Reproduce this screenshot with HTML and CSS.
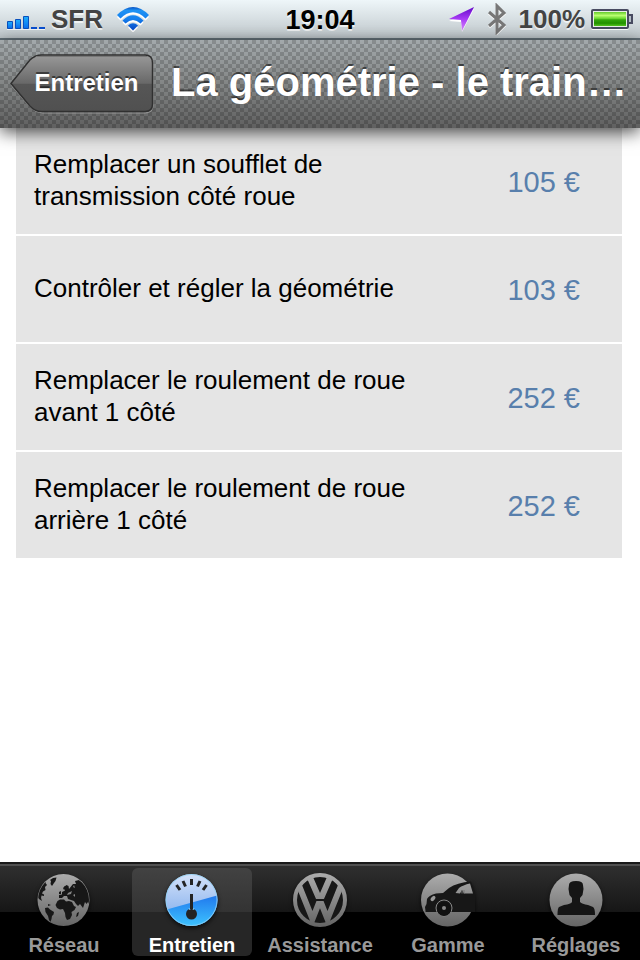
FILE: index.html
```html
<!DOCTYPE html>
<html lang="fr">
<head>
<meta charset="utf-8">
<meta name="viewport" content="width=device-width, initial-scale=1">
<title>La géométrie - le train…</title>
<link rel="stylesheet" href="styles.css">
</head>
<body>
<div class="status">
  <div class="status-left">
    <svg class="signal" width="38" height="22" viewBox="0 0 38 22" aria-hidden="true">
      <defs><linearGradient id="bar" x1="0" y1="0" x2="0" y2="1"><stop offset="0" stop-color="#1fb0fb"/><stop offset="1" stop-color="#0a6df0"/></linearGradient></defs>
      <path d="M0 22h38" stroke="#fff" stroke-width="2" opacity=".8"/>
      <g fill="url(#bar)" stroke="#0a50bd"><path d="M.5 13.500h5v7h-5z"/><path d="M8.500 11.500h5v9h-5z"/><path d="M16.500 8.500h5v12h-5z"/></g>
      <path d="M24 20h6M32 20h6" stroke="#0a4fd0" stroke-width="2"/>
    </svg>
    <span class="carrier">SFR</span>
    <svg class="wifi" width="32" height="26" viewBox="0 0 32 26" aria-hidden="true">
      <defs><linearGradient id="wave" gradientUnits="userSpaceOnUse" x1="0" y1="0" x2="0" y2="24"><stop offset="0" stop-color="#0753c4"/><stop offset=".15" stop-color="#1f93f4"/><stop offset=".5" stop-color="#1580ee"/><stop offset="1" stop-color="#0745c6"/></linearGradient></defs>
      <g fill="#fff" transform="translate(0 3)"><path d="M0 8Q16-8 32 8L28.500 11.500Q16-1 3.500 11.500Z"/><path d="M5.500 13.500Q16 3 26.500 13.500L23.500 16.500Q16 9.500 8.500 16.500Z"/><path d="M11 18.500Q16 14 21 18.500L16 23.500Z"/></g>
      <g fill="url(#wave)" transform="translate(0 1)"><path d="M0 8Q16-8 32 8L28.500 11.500Q16-1 3.500 11.500Z"/><path d="M5.500 13.500Q16 3 26.500 13.500L23.500 16.500Q16 9.500 8.500 16.500Z"/><path d="M11 18.500Q16 14 21 18.500L16 23.500Z"/></g>
    </svg>
  </div>
  <time class="clock">19:04</time>
  <div class="status-right">
    <svg width="26" height="26" viewBox="0 0 26 26" aria-hidden="true">
      <defs><linearGradient id="loc" x1="0" y1="0" x2="0" y2="1"><stop offset="0" stop-color="#6409c9"/><stop offset=".5" stop-color="#a83cf5"/><stop offset="1" stop-color="#d98cff"/></linearGradient></defs>
      <path d="M25 3L13 26L12 16L0 15Z" fill="#fff"/><path d="M25 1L13 25L12 14L0 13Z" fill="url(#loc)"/>
    </svg>
    <svg class="bluetooth" width="20" height="32" viewBox="0 0 20 32" aria-hidden="true">
      <path d="M2 10L17 23L10 30V4L17 11L2 24" fill="none" stroke="#fff" stroke-width="3"/>
      <path d="M2 9L17 22L10 29V3L17 10L2 23" fill="none" stroke="#777" stroke-width="3"/>
    </svg>
    <span class="percent">100%</span>
    <svg width="42" height="22" viewBox="0 0 42 22" aria-hidden="true">
      <defs><linearGradient id="bat" x1="0" y1="0" x2="0" y2="1"><stop offset="0" stop-color="#64cb2b"/><stop offset=".25" stop-color="#b9ff70"/><stop offset=".5" stop-color="#5ed126"/><stop offset=".55" stop-color="#36a80e"/><stop offset=".8" stop-color="#239000"/><stop offset="1" stop-color="#54c51f"/></linearGradient></defs>
      <rect x="1" y="3" width="36" height="18" rx="1" fill="none" stroke="#fff" stroke-width="2"/>
      <rect x="1" y="2" width="36" height="18" rx="1" fill="#e7eee5" stroke="#484b61" stroke-width="2"/>
      <path d="M3 4h32v14H3z" fill="url(#bat)"/><path d="M38 7h3v8h-3" fill="#b4bdc5" stroke="#484b61" stroke-width="2"/>
    </svg>
  </div>
</div>
<header class="nav">
  <button class="back" type="button">
    <svg class="back-shape" viewBox="0 0 146 60" preserveAspectRatio="none" aria-hidden="true">
      <defs><linearGradient id="btn" x1="0" y1="0" x2="0" y2="1"><stop offset="0" stop-color="#999"/><stop offset=".5" stop-color="#686868"/><stop offset=".52" stop-color="#565656"/><stop offset="1" stop-color="#505050"/></linearGradient></defs>
      <path d="M1 31L20 8Q26 2 33 2H136Q144 2 144 10V51Q144 59 136 59H33Q26 59 20 53Z" fill="none" stroke="#a2a2a2" opacity=".8"/>
      <path d="M1 29.500L20 6Q25 1 32 1H136Q143.500 1 143.500 9V50Q143.500 57.500 136 57.500H32Q25 57.500 20 52Z" fill="url(#btn)" stroke="#303030" stroke-width="1.500"/>
      <path d="M26 2.500H138" stroke="#777"/>
    </svg>
    <span class="back-label">Entretien</span>
  </button>
  <h1 class="title">La géométrie - le train…</h1>
</header>
<main class="content">
  <ul class="services">
    <li class="service"><span class="name">Remplacer un soufflet de transmission côté roue</span><span class="price">105 €</span></li>
    <li class="service"><span class="name">Contrôler et régler la géométrie</span><span class="price">103 €</span></li>
    <li class="service"><span class="name">Remplacer le roulement de roue avant 1 côté</span><span class="price">252 €</span></li>
    <li class="service"><span class="name">Remplacer le roulement de roue arrière 1 côté</span><span class="price">252 €</span></li>
  </ul>
</main>
<nav class="tabs">
  <a class="tab" href="#reseau">
    <svg class="icon" viewBox="0 0 54 54" aria-hidden="true">
      <defs><linearGradient id="grey" gradientUnits="userSpaceOnUse" x1="0" y1="0" x2="0" y2="54"><stop offset="0" stop-color="#adadad"/><stop offset="1" stop-color="#646464"/></linearGradient>
      <clipPath id="globe"><circle cx="26.500" cy="27" r="25.500"/></clipPath></defs>
      <circle cx="26.500" cy="27" r="26" fill="url(#grey)"/>
      <g fill="#171717" clip-path="url(#globe)">
        <path d="M13 7L16 5L19.500 4.500L18.500 8L17 10L15 13L13.500 11L14 8Z"/>
        <path d="M9 7L8.500 10L10 12L8 14L8.500 17L6 18.500L5 20.500L7 21.500L7 23L4.500 22.500L4 25L5 28L2 26L0 23V15L4 9Z"/>
        <path d="M8 35L11 34.500L13 36.500L17 39L16.500 41.500L15 43L14.500 46L13.500 49L12 47L11 43L8.500 39Z"/>
        <path d="M20.500 28L23 26.500L27 26.500L29 28.500L32 28L35 29L37 33L39 34L37.500 37L34.500 39L35 42L33 46L30 47L28.500 44L28 40L26 36L23 36.500L20 35L18.500 32Z"/>
        <path d="M22 25V22L25 21.500L25 19L28 17.500L27 14L29.500 12L31.500 13L32 16L36 11L39 11L38 8L42 7L54 16V35L51 29L49.500 31L48 29L46 35L43 31L41 33L39 31L37 28L34 27L31 26L30 23L27 23L25 25Z"/>
        <path d="M26 15l2-2 1 2-2 2zM22 19l2-1v3h-2zM40 40l2-1-1 4-2 1zM11 31l3 1-3 1z"/>
      </g>
      <path d="M31 20l4-2-1 3-4 1zM36 22l2-1v3zM36 14l1-2 1 3z" fill="#858585"/>
    </svg>
    <span>Réseau</span>
  </a>
  <a class="tab active" href="#entretien" aria-current="page">
    <svg class="icon" viewBox="0 0 54 54" aria-hidden="true">
      <defs><linearGradient id="pale" x1="0" y1="0" x2="0" y2="1"><stop offset="0" stop-color="#d6e3fa"/><stop offset="1" stop-color="#75a6ea"/></linearGradient><linearGradient id="blue" x1="0" y1="0" x2="0" y2="1"><stop offset="0" stop-color="#2077ed"/><stop offset="1" stop-color="#3ec5ff"/></linearGradient>
      <clipPath id="dial"><circle cx="26.500" cy="27" r="26"/></clipPath></defs>
      <g clip-path="url(#dial)"><path d="M0 0h54v54H0z" fill="url(#pale)"/><path d="M0 37L54 22V54H0Z" fill="url(#blue)"/></g>
      <circle cx="26.500" cy="27" r="25.500" fill="none" stroke="#8ed0f4" opacity=".8"/>
      <g stroke="#242424" stroke-width="3"><path d="M11.500 12L15 17M18 8L20.500 13.500M26.500 6V12M35 8L32.500 13.500M41.500 12L38 17M26.500 21V38"/></g>
      <circle cx="26.500" cy="41" r="5.500" fill="#242424"/><path d="M25 37L24 35M28 37L29 35" stroke="#86ccf5"/>
    </svg>
    <span>Entretien</span>
  </a>
  <a class="tab" href="#assistance">
    <svg class="icon" viewBox="0 0 54 54" aria-hidden="true">
      <defs><clipPath id="badge"><circle cx="27" cy="27" r="26"/></clipPath></defs>
      <circle cx="27" cy="27" r="25" fill="#171717" stroke="url(#grey)" stroke-width="4"/>
      <g fill="none" stroke="url(#grey)" stroke-width="6" clip-path="url(#badge)"><path d="M15 0L25 23H29L39 0"/><path d="M5 10L19.500 46L25.500 31H28.500L34.500 46L49 10"/></g>
    </svg>
    <span>Assistance</span>
  </a>
  <a class="tab" href="#gamme">
    <svg class="icon" viewBox="0 0 54 54" aria-hidden="true">
      <circle cx="26.500" cy="27" r="26.500" fill="url(#grey)"/>
      <path d="M4.500 38L4 34L5.500 31L6 26Q8 22 15 20.500L22 20L28 15Q36 9.500 50 8.500L54 20V39H4.500Z" fill="#171717"/>
      <path d="M34.500 20L38 15Q42 12 49 10.500L52 20.500H43L41 17L39 20.500Z" fill="url(#grey)"/>
      <path d="M41 18V20.500M43 17V20.500" stroke="#777"/>
      <ellipse cx="12" cy="25.500" rx="3" ry="1.800" transform="rotate(-50 12 25.500)" fill="#999"/>
      <circle cx="23" cy="35" r="8" fill="#171717" stroke="#898989" stroke-width="1"/><circle cx="23" cy="36" r="7" fill="#111"/><circle cx="23" cy="35" r="2" fill="#888"/>
    </svg>
    <span>Gamme</span>
  </a>
  <a class="tab" href="#reglages">
    <svg class="icon" viewBox="0 0 54 54" aria-hidden="true">
      <circle cx="27" cy="27" r="26.500" fill="url(#grey)"/>
      <path d="M20 12Q20 8 27 8Q34 8 34 12L34.500 16L33.500 22L31 25V29Q33 31 39 32L44 34Q46 35 46 42H8.500Q8.500 35 10 34L15 32Q22 31 23 29V25L20.500 22L19.500 16Z" fill="#151515"/>
    </svg>
    <span>Réglages</span>
  </a>
</nav>
</body>
</html>
```
FILE: styles.css
```css
* {
  box-sizing: border-box;
}

body {
  margin: 0;
  min-height: 100vh;
  display: flex;
  flex-direction: column;
  background: #fff;
  color: #000;
  font-family: "Liberation Sans", Arial, sans-serif;
}

.status {
  display: grid;
  grid-template-columns: 1fr auto 1fr;
  align-items: center;
  height: 40px;
  padding: 0 7px;
  background: linear-gradient(#eef6f9, #c0c8cc);
  border-bottom: 2px solid #65727a;
  font-size: 26px;
  font-weight: bold;
  line-height: 38px;
  text-shadow: 0 2px 0 rgba(255, 255, 255, 0.7);
}

.status-left,
.status-right {
  display: flex;
  align-items: center;
  color: #444;
}

.status-left {
  gap: 6px;
}

.status-right {
  justify-content: flex-end;
  gap: 6px;
}

.clock {
  padding-top: 2px;
  font-size: 27px;
  line-height: 36px;
}

.wifi {
  margin-left: 8px;
}

.bluetooth {
  margin: 0 6px;
}

.nav {
  position: relative;
  z-index: 1;
  display: flex;
  align-items: center;
  gap: 16px;
  height: 88px;
  padding: 0 10px;
  background:
    repeating-conic-gradient(rgba(0, 0, 0, 0.17) 0 25%, transparent 0 50%) 0 0 / 8px 8px,
    linear-gradient(#a3a9ac, #868989 45%, #606060);
  box-shadow: 0 4px 16px rgba(0, 0, 0, 0.7);
}

.back {
  position: relative;
  flex: none;
  width: 145px;
  height: 60px;
  padding: 0 0 0 8px;
  border: 0;
  background: none;
  color: #fff;
  font: bold 24px/56px "Liberation Sans", Arial, sans-serif;
  text-shadow: 0 -2px 0 rgba(0, 0, 0, 0.5);
}

.back-shape {
  position: absolute;
  inset: 0;
  width: 100%;
  height: 100%;
}

.back-label {
  position: relative;
  display: block;
  padding-bottom: 2px;
}

.title {
  flex: 1;
  margin: 0;
  padding-bottom: 4px;
  color: #fff;
  font-size: 40px;
  line-height: 48px;
  white-space: nowrap;
  text-shadow: 0 -2px 0 rgba(0, 0, 0, 0.5);
}

.content {
  flex: 1;
  padding: 0 18px 16px 16px;
}

.services {
  display: grid;
  gap: 2px;
  margin: 0;
  padding: 0;
  list-style: none;
}

.service {
  display: flex;
  align-items: center;
  justify-content: space-between;
  min-height: 106px;
  padding: 0 42px 0 18px;
  background: #e5e5e5;
}

.name {
  max-width: 400px;
  padding-bottom: 2px;
  font-size: 26px;
  line-height: 32px;
}

.price {
  padding-top: 2px;
  color: #587fac;
  font-size: 29px;
  line-height: 32px;
}

.tabs {
  display: flex;
  height: 98px;
  border-top: 2px solid #1a1a1a;
  background: linear-gradient(#505050 0 2px, #2f2f2f 2px, #161616 48px, #000 48px);
}

.tab {
  flex: 1;
  display: flex;
  flex-direction: column;
  align-items: center;
  margin: 4px;
  padding-top: 5px;
  border-radius: 6px;
  color: #999;
  font-size: 20px;
  font-weight: bold;
  line-height: 24px;
  text-decoration: none;
}

.tab.active {
  background: linear-gradient(#424242, #333 44px, #262626 44px);
  color: #fff;
}

.icon {
  flex: none;
  width: 54px;
  height: 54px;
  margin-bottom: 6px;
  filter: drop-shadow(0 2px 2px rgba(0, 0, 0, 0.7));
}
```
